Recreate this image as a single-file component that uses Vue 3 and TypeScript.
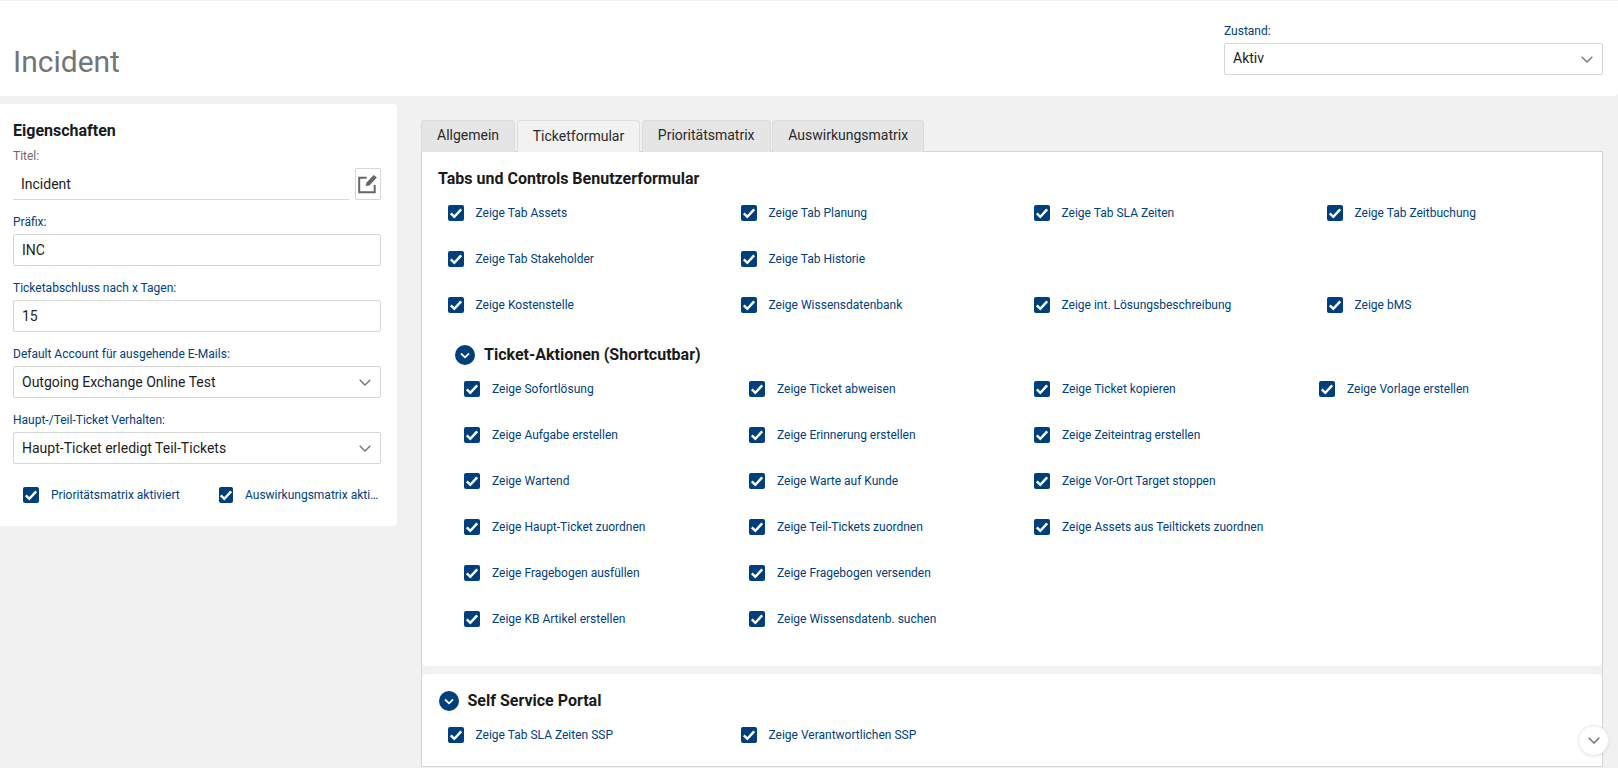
<script setup lang="ts">
const tabs = ['Allgemein', 'Ticketformular', 'Prioritätsmatrix', 'Auswirkungsmatrix']
const formRows: string[][] = [
  ['Zeige Tab Assets', 'Zeige Tab Planung', 'Zeige Tab SLA Zeiten', 'Zeige Tab Zeitbuchung'],
  ['Zeige Tab Stakeholder', 'Zeige Tab Historie'],
  ['Zeige Kostenstelle', 'Zeige Wissensdatenbank', 'Zeige int. Lösungsbeschreibung', 'Zeige bMS'],
]
const actionRows: string[][] = [
  ['Zeige Sofortlösung', 'Zeige Ticket abweisen', 'Zeige Ticket kopieren', 'Zeige Vorlage erstellen'],
  ['Zeige Aufgabe erstellen', 'Zeige Erinnerung erstellen', 'Zeige Zeiteintrag erstellen'],
  ['Zeige Wartend', 'Zeige Warte auf Kunde', 'Zeige Vor-Ort Target stoppen'],
  ['Zeige Haupt-Ticket zuordnen', 'Zeige Teil-Tickets zuordnen', 'Zeige Assets aus Teiltickets zuordnen'],
  ['Zeige Fragebogen ausfüllen', 'Zeige Fragebogen versenden'],
  ['Zeige KB Artikel erstellen', 'Zeige Wissensdatenb. suchen'],
]
const sspRows: string[][] = [['Zeige Tab SLA Zeiten SSP', 'Zeige Verantwortlichen SSP']]
const sections = [
  { key: 'form', cls: 'sec-form', rows: formRows },
  { key: 'actions', cls: 'sec-actions', title: 'Ticket-Aktionen (Shortcutbar)', rows: actionRows },
]
</script>

<template>
  <div class="page">
    <header class="top">
      <h1 class="page-title">Incident</h1>
      <div class="state">
        <label class="lbl">Zustand:</label>
        <div class="field select">
          <span class="state-value">Aktiv</span>
          <svg class="chev" viewBox="0 0 12 7" width="12" height="7"><path d="M.7.7 6 6 11.3.7" fill="none" stroke="#6f7378" stroke-width="1.3" /></svg>
        </div>
      </div>
    </header>

    <main class="body">
      <aside class="card">
        <h2 class="card-title">Eigenschaften</h2>
        <label class="lbl lbl-grey">Titel:</label>
        <div class="title-row">
          <div class="underline">Incident</div>
          <button class="icon-btn" type="button" aria-label="Bearbeiten">
            <svg viewBox="0 0 20 20" width="20" height="20">
              <path d="M8.7 3.7H1.2V18.3H16.7V11" fill="none" stroke="#666" stroke-width="2" />
              <path d="M7.6 12 8.6 8.6 15.6 1 18.9 3.6 11.4 11.4z" fill="#666" />
            </svg>
          </button>
        </div>
        <label class="lbl gap">Präfix:</label>
        <div class="field">INC</div>
        <label class="lbl gap">Ticketabschluss nach x Tagen:</label>
        <div class="field">15</div>
        <label class="lbl gap">Default Account für ausgehende E-Mails:</label>
        <div class="field select">
          <span>Outgoing Exchange Online Test</span>
          <svg class="chev" viewBox="0 0 12 7" width="12" height="7"><path d="M.7.7 6 6 11.3.7" fill="none" stroke="#6f7378" stroke-width="1.3" /></svg>
        </div>
        <label class="lbl gap">Haupt-/Teil-Ticket Verhalten:</label>
        <div class="field select">
          <span>Haupt-Ticket erledigt Teil-Tickets</span>
          <svg class="chev" viewBox="0 0 12 7" width="12" height="7"><path d="M.7.7 6 6 11.3.7" fill="none" stroke="#6f7378" stroke-width="1.3" /></svg>
        </div>
        <div class="card-checks">
          <div class="check check-a">
            <span class="box"><svg viewBox="0 0 16 16" width="16" height="16"><path d="M2.8 8.4 6.3 11.8 13.2 4.4" fill="none" stroke="#fff" stroke-width="2.5" /></svg></span>
            <span class="check-text">Prioritätsmatrix aktiviert</span>
          </div>
          <div class="check check-b">
            <span class="box box-b"><svg viewBox="0 0 16 16" width="16" height="16"><path d="M2.8 8.4 6.3 11.8 13.2 4.4" fill="none" stroke="#fff" stroke-width="2.5" /></svg></span>
            <span class="check-text ellipsis">Auswirkungsmatrix aktiviert</span>
          </div>
        </div>
      </aside>

      <section class="content">
        <nav class="tabs">
          <div v-for="t in tabs" :key="t" class="tab" :class="{ active: t === 'Ticketformular' }">{{ t }}</div>
        </nav>
        <div class="panel">
          <div class="upper">
            <template v-for="s in sections" :key="s.key">
              <div :class="s.cls">
                <h3 v-if="!s.title" class="sec-title">Tabs und Controls Benutzerformular</h3>
                <h3 v-else class="sec-title with-toggle">
                  <span class="toggle"><svg viewBox="0 0 20 20" width="20" height="20"><path d="M6 8.5 10 12.3l4-3.8" fill="none" stroke="#fff" stroke-width="1.8" /></svg></span>
                  {{ s.title }}
                </h3>
                <div v-for="(row, i) in s.rows" :key="i" class="row">
                  <div v-for="c in row" :key="c" class="check">
                    <span class="box"><svg viewBox="0 0 16 16" width="16" height="16"><path d="M2.8 8.4 6.3 11.8 13.2 4.4" fill="none" stroke="#fff" stroke-width="2.5" /></svg></span>
                    <span class="check-text">{{ c }}</span>
                  </div>
                </div>
              </div>
            </template>
          </div>
          <div class="lower">
            <h3 class="sec-title with-toggle">
              <span class="toggle"><svg viewBox="0 0 20 20" width="20" height="20"><path d="M6 8.5 10 12.3l4-3.8" fill="none" stroke="#fff" stroke-width="1.8" /></svg></span>
              Self Service Portal
            </h3>
            <div v-for="(row, i) in sspRows" :key="i" class="row">
              <div v-for="c in row" :key="c" class="check">
                <span class="box"><svg viewBox="0 0 16 16" width="16" height="16"><path d="M2.8 8.4 6.3 11.8 13.2 4.4" fill="none" stroke="#fff" stroke-width="2.5" /></svg></span>
                <span class="check-text">{{ c }}</span>
              </div>
            </div>
          </div>
          <button class="scroll-btn" type="button" aria-label="Nach unten">
            <svg viewBox="0 0 12 7" width="12" height="7"><path d="M.7.7 6 6 11.3.7" fill="none" stroke="#6f7378" stroke-width="1.5" /></svg>
          </button>
        </div>
      </section>
    </main>
  </div>
</template>

<style>
html, body { margin: 0; background: #f1f1f1; overflow: hidden; }
</style>

<style scoped>
* { box-sizing: border-box; }
.page {
  height: 768px;
  padding-top: 1px;
  overflow: hidden;
  display: flex;
  flex-direction: column;
  background: #f1f1f1;
  font-family: Roboto, "Liberation Sans", sans-serif;
  color: #1d1d1d;
}
.top {
  height: 95px;
  flex: none;
  background: #fff;
  padding: 0 15px 0 13px;
  display: flex;
  justify-content: space-between;
  border-radius: 0 0 4px 0;
}
.page-title {
  margin: 43px 0 0;
  font-size: 30px;
  font-weight: 400;
  line-height: 36px;
  color: #757575;
}
.state { width: 379px; padding-top: 23px; }
.lbl {
  display: block;
  font-size: 12px;
  line-height: 14px;
  color: #004080;
}
.lbl-grey { color: #6b6b6b; }
.state .lbl { margin-bottom: 5px; }
.gap { margin-top: 15px; margin-bottom: 5px; }
.field {
  height: 32px;
  border: 1px solid #d6d6d6;
  border-radius: 2px;
  padding: 0 8px;
  font-size: 14px;
  line-height: 30px;
  color: #1d1d1d;
  background: #fff;
}
.select { display: flex; justify-content: space-between; align-items: center; padding-right: 9px; }
.state-value { margin-bottom: 2px; }
.body { flex: 1; display: flex; align-items: flex-start; min-height: 0; }
.card {
  width: 397px;
  height: 422px;
  margin-top: 8px;
  flex: none;
  background: #fff;
  border-radius: 0 4px 4px 0;
  padding: 17px 16px 0 13px;
}
.card-title { margin: 0 0 9px; font-size: 16px; line-height: 19px; font-weight: 700; color: #1a1a1a; }
.title-row { display: flex; justify-content: space-between; margin-top: 5px; height: 32px; }
.underline {
  width: 336px;
  height: 32px;
  border-bottom: 1px solid #d6d6d6;
  padding-left: 8px;
  font-size: 14px;
  line-height: 32px;
}
.icon-btn {
  width: 26px;
  height: 32px;
  padding: 0;
  border: 1px solid #d6d6d6;
  border-radius: 2px;
  background: #fff;
  display: flex;
  align-items: center;
  justify-content: center;
}
.card-checks { display: flex; margin-top: 23px; padding-left: 10px; }
.check { display: flex; align-items: center; min-width: 0; }
.check-a { width: 196px; flex: none; }
.check-b { flex: 1; min-width: 0; }
.box {
  width: 16px;
  height: 16px;
  flex: none;
  border-radius: 2px;
  background: #003f7d;
  margin-right: 12px;
  display: block;
}
.box svg { display: block; }
.box-b { width: 14px; margin-right: 12px; }
.box-b svg { margin-left: -1px; }
.check-text { font-size: 12px; line-height: 16px; color: #004080; white-space: nowrap; }
.ellipsis { overflow: hidden; text-overflow: ellipsis; }
.content { flex: 1; min-width: 0; padding: 24px 15px 0 24px; }
.tabs { display: flex; gap: 1.7px; height: 32px; position: relative; z-index: 1; }
.tab {
  height: 32px;
  padding: 0 15px;
  background: #e5e5e5;
  border: 1px solid #dcdcdc;
  border-bottom: none;
  border-radius: 4px 4px 0 0;
  font-size: 14px;
  line-height: 29px;
  color: #2a2a2a;
}
.tab.active { background: #f2f2f2; border-color: #dedede; line-height: 31px; }
.panel {
  position: relative;
  height: 616px;
  background: #f1f1f1;
  border: 1px solid #d6d6d6;
  margin-top: -1px;
}
.upper { height: 514px; background: #fff; border-radius: 0 0 4px 4px; }
.lower { height: 92px; margin-top: 8px; background: #fff; border-radius: 4px 4px 0 0; padding: 17px 0 0 17px; }
.lower .with-toggle { gap: 8.5px; }
.sec-form { padding: 17px 0 0 16px; }
.sec-form .row { padding-left: 10px; grid-template-columns: repeat(4, 293px); }
.sec-form .box, .lower .box { margin-right: 11.5px; }
.sec-actions { padding: 0 0 0 33px; margin-top: 12px; }
.sec-actions .row { padding-left: 9px; grid-template-columns: repeat(4, 285px); }
.sec-title {
  margin: 0;
  font-size: 16px;
  line-height: 20px;
  font-weight: 700;
  color: #1a1a1a;
}
.sec-form > .sec-title { margin-bottom: 6px; }
.sec-actions > .sec-title { margin-bottom: 6px; }
.lower > .sec-title { margin-bottom: 6px; }
.with-toggle { display: flex; align-items: center; gap: 9px; }
.toggle { width: 20px; height: 20px; border-radius: 50%; background: #003f7d; flex: none; display: block; }
.toggle svg { display: block; }
.row { display: grid; height: 46px; grid-template-columns: repeat(4, 293px); align-items: start; padding-top: 10px; }
.lower .row { padding-left: 9px; }
.scroll-btn {
  position: absolute;
  right: -7px;
  bottom: 10px;
  width: 31px;
  height: 31px;
  padding: 0;
  border-radius: 50%;
  border: 1px solid #ececec;
  background: #fff;
  box-shadow: 0 1px 3px rgba(0,0,0,.08);
  display: flex;
  align-items: center;
  justify-content: center;
}
</style>
